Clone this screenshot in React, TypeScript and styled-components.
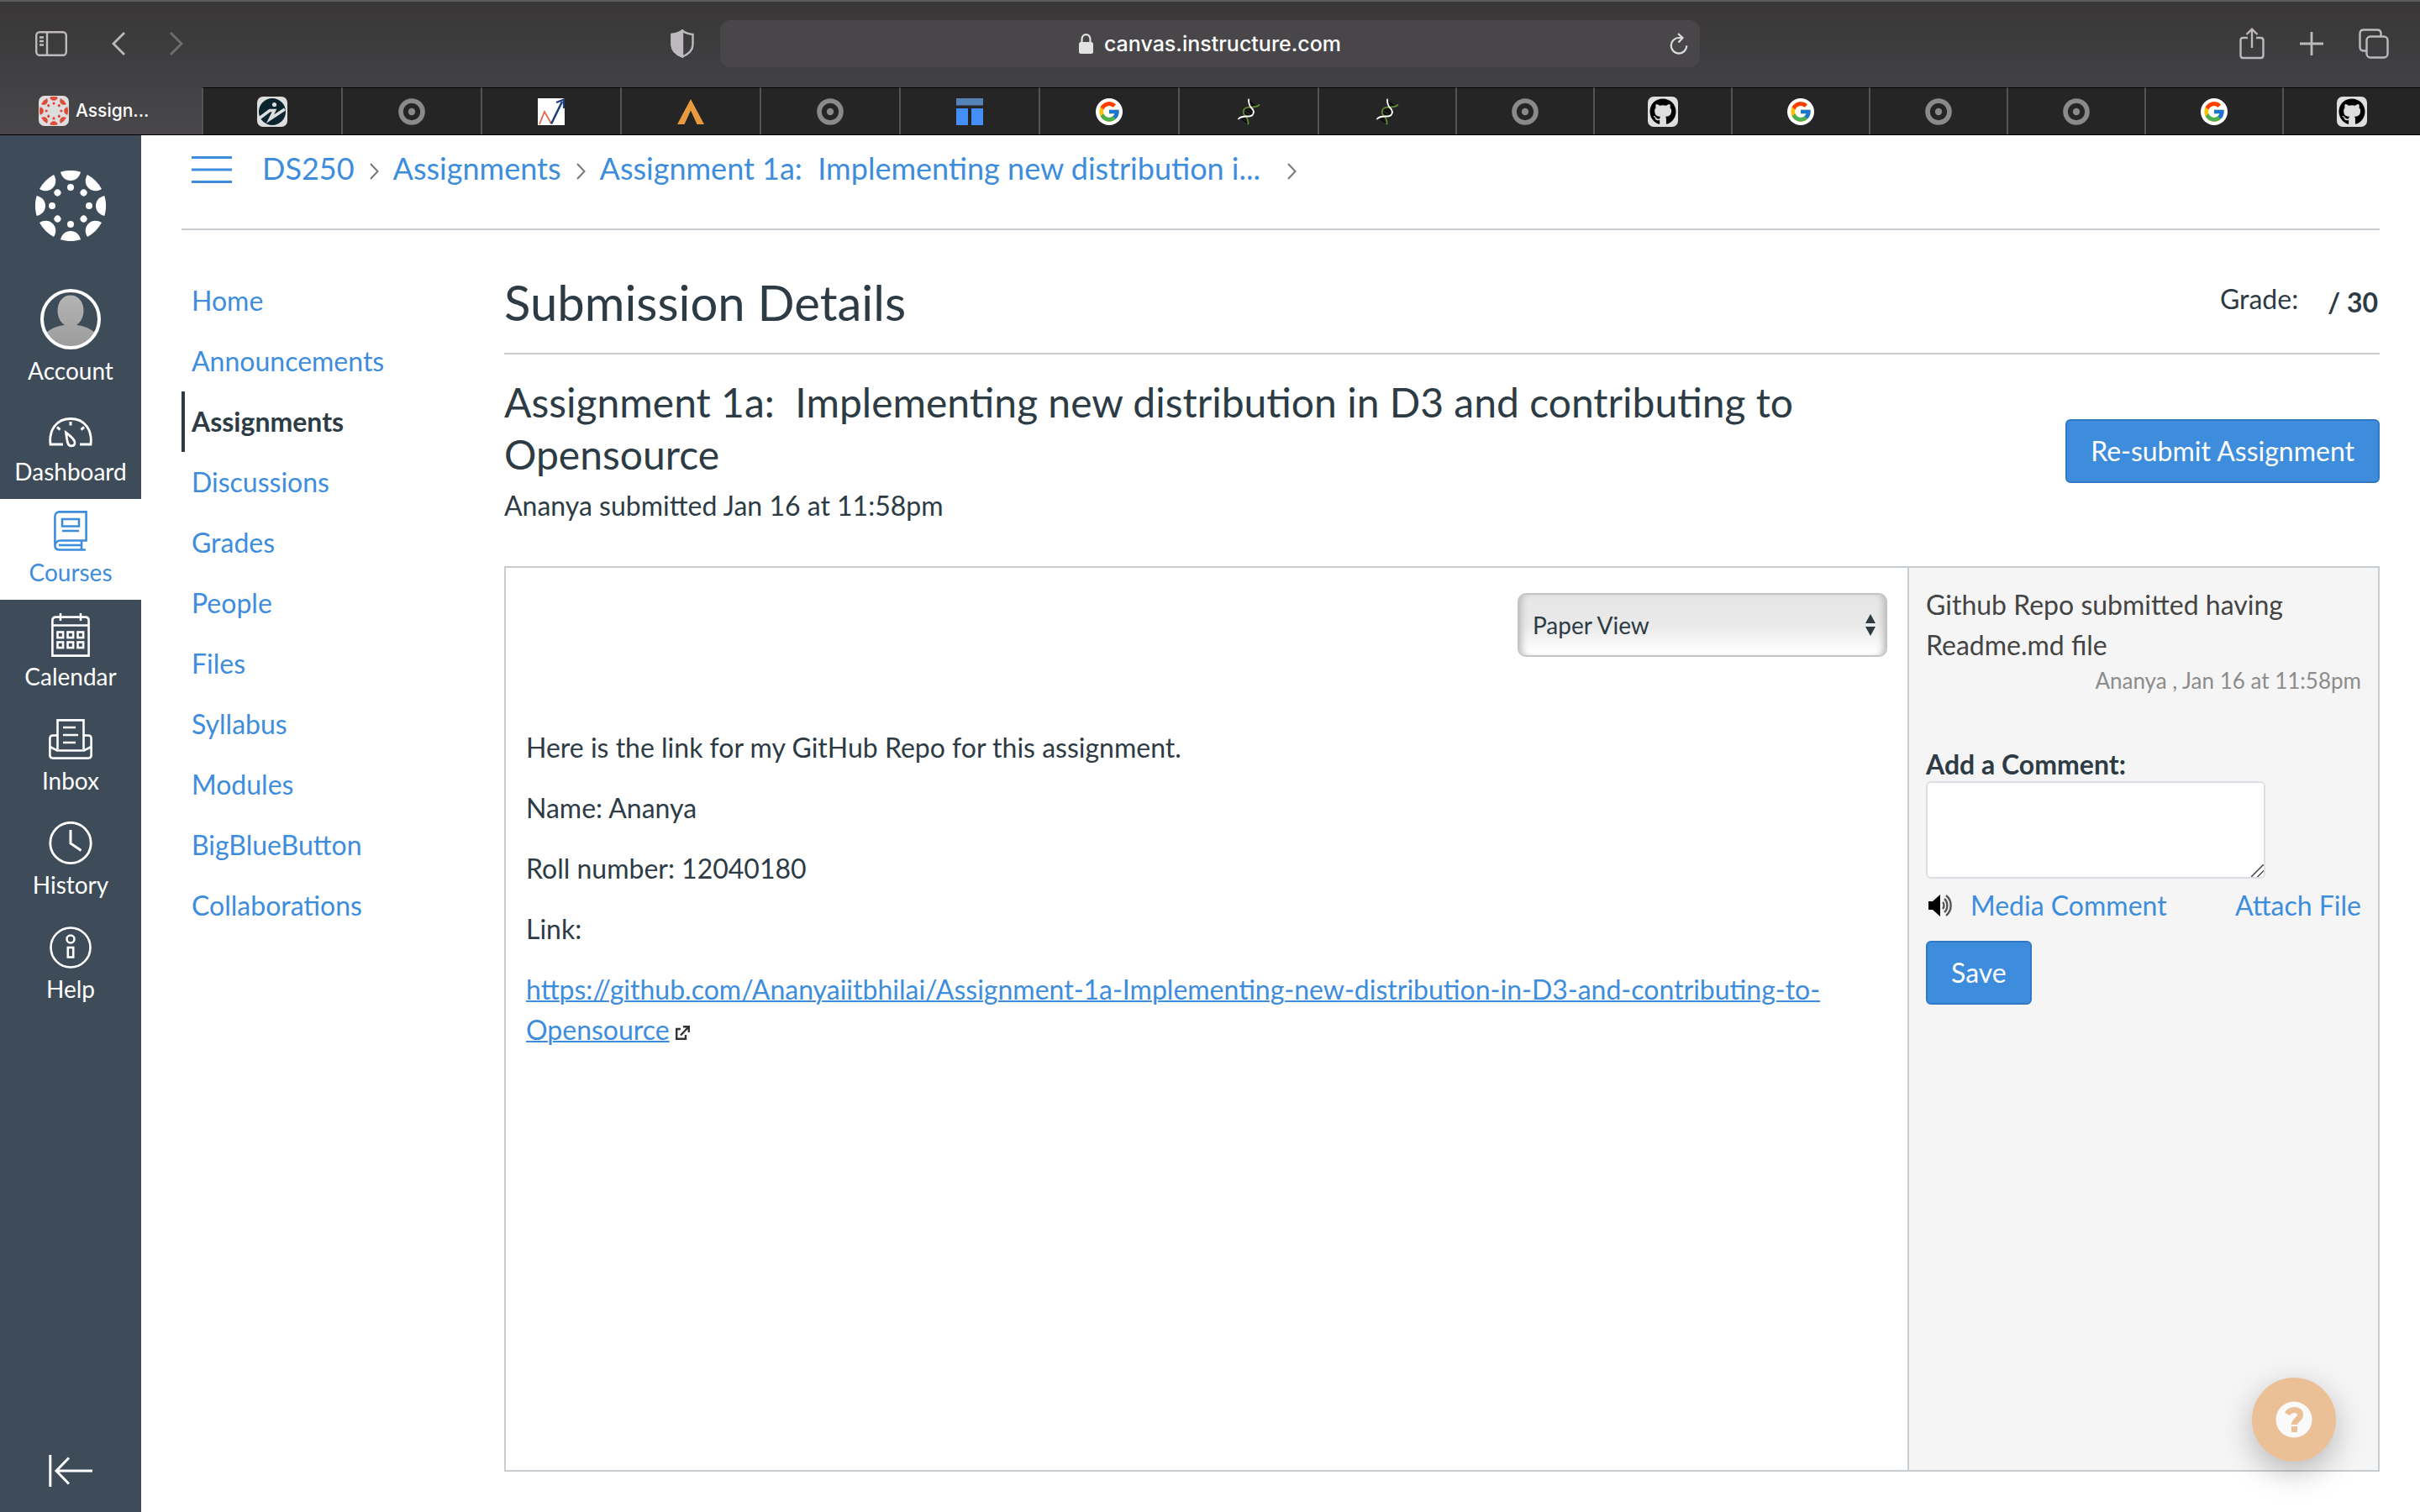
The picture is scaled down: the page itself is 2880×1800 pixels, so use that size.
import React from "react";
import styled, { createGlobalStyle } from "styled-components";
import { FaGithub } from "react-icons/fa";
import { FcGoogle } from "react-icons/fc";

const link = "#3e8ddd";
const ink = "#2d3b45";
const rule = "#c7cdd1";
const rail = "#3e4b58";

const GlobalStyle = createGlobalStyle`
  *, *::before, *::after { box-sizing: border-box; }
  body {
    margin: 0;
    background: #fff;
    color: ${ink};
    font-family: Lato, "Liberation Sans", sans-serif;
    font-size: 32px;
    line-height: 48px;
  }
  button, select, textarea { font: inherit; margin: 0; }
  a { color: ${link}; text-decoration: none; }
  h1, h2, p, ul, ol { margin: 0; padding: 0; }
  ul, ol { list-style: none; }
  svg { display: block; flex: none; }
`;

const Page = styled.div`
  display: flex;
  flex-direction: column;
  min-height: 100vh;
`;

/* Browser window */

const Toolbar = styled.header`
  display: grid;
  grid-template-columns: 857fr 1166fr 857fr;
  align-items: center;
  height: 104px;
  padding-bottom: 2px;
  border-top: 2px solid #5c5b5d;
  background: linear-gradient(#383636, #424144);
  color: #bcbabd;
`;

const ToolGroup = styled.div<{ $end?: boolean }>`
  display: flex;
  align-items: center;
  justify-content: ${(p) => (p.$end ? "flex-end" : "space-between")};
  gap: ${(p) => (p.$end ? "42px" : "0")};
  padding: ${(p) => (p.$end ? "0 37px 0 0" : "0 31px 0 42px")};
`;

const ToolSet = styled.div`
  display: flex;
  align-items: center;
  gap: 53px;
`;

const ToolButton = styled.button<{ $dim?: boolean }>`
  display: flex;
  padding: 0;
  border: 0;
  background: none;
  color: inherit;
  opacity: ${(p) => (p.$dim ? 0.4 : 1)};
`;

const AddressBar = styled.div`
  display: grid;
  grid-template-columns: 1fr auto 1fr;
  align-items: center;
  height: 56px;
  padding: 0 14px;
  border-radius: 12px;
  background: #484649;
  color: #fff;
  font-family: Inter, "Liberation Sans", sans-serif;
  font-size: 25px;
  font-weight: 500;
  line-height: 32px;
`;

const Address = styled.div`
  grid-column: 2;
  display: flex;
  align-items: center;
  gap: 13px;
`;

const ReloadSlot = styled.div`
  display: flex;
  justify-content: flex-end;
`;

const TabStrip = styled.nav`
  display: flex;
  height: 57px;
  border-bottom: 1px solid #000;
  background: #252525;
`;

const ActiveTab = styled.a`
  display: flex;
  align-items: center;
  gap: 8px;
  width: 240px;
  padding-left: 46px;
  background: linear-gradient(#424144, #49474a);
  color: #fff;
  font-family: Inter, "Liberation Sans", sans-serif;
  font-size: 21px;
  font-weight: 500;
  line-height: 28px;
`;

const Tab = styled.a<{ $share: number }>`
  flex: ${(p) => p.$share} 1 0;
  display: flex;
  align-items: center;
  justify-content: center;
  border-top: 1px solid #000;
  border-left: 2px solid #555;
`;

const Badge = styled.span`
  display: flex;
  align-items: center;
  justify-content: center;
  width: 36px;
  height: 36px;
  border-radius: 7px;
  background: #dedede;
  color: #000;
`;

const GoogleBadge = styled(Badge)`
  width: 32px;
  height: 32px;
  border-radius: 50%;
  background: #fff;
`;

/* Canvas page */

const Body = styled.div`
  flex: 1;
  display: flex;
`;

const Rail = styled.nav`
  display: flex;
  flex-direction: column;
  justify-content: space-between;
  width: 168px;
  background: ${rail};
`;

const LogoLink = styled.a`
  display: flex;
  justify-content: center;
  padding: 42px 0 41px;
  color: #fff;
`;

const RailLink = styled.a<{ $active?: boolean; $roomy?: boolean }>`
  display: flex;
  flex-direction: column;
  align-items: center;
  gap: 2px;
  padding: ${(p) => (p.$roomy ? "16px" : "14px")} 0 12px;
  background: ${(p) => (p.$active ? "#fff" : "transparent")};
  color: ${(p) => (p.$active ? link : "#fff")};
  font-size: 28px;
  line-height: 42px;
`;

const CollapseButton = styled.button`
  display: flex;
  justify-content: center;
  padding: 0 0 30px;
  border: 0;
  background: none;
  color: #fff;
`;

const Main = styled.div`
  flex: 1;
  min-width: 0;
  display: flex;
  flex-direction: column;
  padding: 0 48px;
`;

const Crumbs = styled.nav`
  display: flex;
  align-items: center;
  height: 113px;
  padding: 0 12px 30px;
  border-bottom: 2px solid ${rule};
  font-size: 36px;
  line-height: 48px;
`;

const MenuButton = styled.button`
  display: flex;
  margin-right: 36px;
  padding: 0;
  border: 0;
  background: none;
  color: ${link};
`;

const CrumbList = styled.ol`
  display: flex;
  align-items: center;
  gap: 17px;
  padding-bottom: 4px;
  white-space: pre;
`;

const Crumb = styled.li<{ $last?: boolean }>`
  display: flex;
  align-items: center;
  gap: ${(p) => (p.$last ? "32px" : "18px")};
`;

const Columns = styled.div`
  flex: 1;
  display: flex;
`;

const CourseNav = styled.ul`
  width: 384px;
  padding-top: 48px;
`;

const CourseLink = styled.a<{ $active?: boolean }>`
  display: block;
  padding: 12px 8px;
  border-left: 4px solid ${(p) => (p.$active ? ink : "transparent")};
  color: ${(p) => (p.$active ? ink : link)};
  font-weight: ${(p) => (p.$active ? 700 : 400)};
`;

const Content = styled.main`
  flex: 1;
  min-width: 0;
  display: flex;
  flex-direction: column;
  padding-bottom: 48px;
`;

const TitleRow = styled.div`
  display: flex;
  align-items: flex-start;
  justify-content: space-between;
  height: 148px;
  padding-top: 46px;
  border-bottom: 2px solid ${rule};
`;

const PageTitle = styled.h1`
  font-size: 58px;
  font-weight: 400;
  line-height: 80px;
`;

const Grade = styled.div`
  display: flex;
  align-items: flex-start;
  gap: 35px;
  padding: 12px 2px 0 0;
`;

const Points = styled.strong`
  padding-top: 4px;
`;

const SummaryRow = styled.div`
  display: flex;
  align-items: center;
  justify-content: space-between;
  gap: 48px;
  padding: 26px 0 48px;
`;

const Summary = styled.div`
  flex: 1;
  max-width: 1600px;
`;

const AssignmentTitle = styled.h2`
  padding-bottom: 6px;
  font-size: 48px;
  font-weight: 400;
  line-height: 62px;
  white-space: pre-wrap;
`;

const PrimaryButton = styled.button`
  height: 76px;
  padding: 0 28px;
  border: 2px solid #2f78c4;
  border-radius: 6px;
  background: ${link};
  color: #fff;
  line-height: 40px;
`;

const Submission = styled.section`
  flex: 1;
  display: flex;
  border: 2px solid ${rule};
`;

const Preview = styled.div`
  flex: 1;
  min-width: 0;
  display: flex;
  flex-direction: column;
  gap: 84px;
  padding: 30px 24px;
`;

const ViewPicker = styled.label`
  align-self: flex-end;
  display: grid;
  align-items: center;
  width: 440px;
  height: 76px;
  color: ${ink};

  > * { grid-area: 1 / 1; }
  > svg { justify-self: end; margin-right: 14px; pointer-events: none; }
`;

const ViewSelect = styled.select`
  appearance: none;
  width: 100%;
  height: 100%;
  padding: 0 16px;
  border: 2px solid #c4c4c4;
  border-radius: 10px;
  background: linear-gradient(#e6e6e6 0%, #e9e9e9 50%, #fefefe 95%);
  box-shadow: inset 8px 0 8px -6px #b4b4b4, inset -8px 0 8px -6px #b4b4b4;
  color: ${ink};
  font-size: 28px;
  line-height: 40px;
`;

const Prose = styled.div`
  display: flex;
  flex-direction: column;
  gap: 24px;

  a { text-decoration: underline; text-decoration-thickness: 2px; }
  svg { display: inline-block; margin-left: 7px; }
`;

const Comments = styled.aside`
  display: flex;
  flex-direction: column;
  width: 560px;
  padding: 20px;
  border-left: 2px solid ${rule};
  background: #f5f5f5;
`;

const CommentText = styled.p`
  max-width: 460px;
  color: #444;
`;

const CommentMeta = styled.p`
  color: #8c8c8c;
  font-size: 26px;
  line-height: 36px;
  text-align: right;
`;

const CommentForm = styled.form`
  display: flex;
  flex-direction: column;
  align-items: flex-start;
  padding-top: 62px;
`;

const CommentLabel = styled.label`
  font-weight: 700;
  line-height: 40px;
`;

const CommentBox = styled.textarea`
  width: 404px;
  height: 116px;
  padding: 8px;
  border: 2px solid #d9dfe4;
  border-radius: 6px;
  background: #fff;
  resize: both;

  &::-webkit-scrollbar { width: 18px; }
  &::-webkit-resizer {
    background: linear-gradient(
      135deg,
      transparent 46%, #555 47% 53%, transparent 54% 72%, #555 73% 79%, transparent 80%
    );
  }
`;

const Attachments = styled.div`
  align-self: stretch;
  display: flex;
  align-items: flex-start;
  justify-content: space-between;
  padding: 8px 0 18px;
`;

const MediaLink = styled.a`
  display: flex;
  align-items: center;
  gap: 20px;
  padding-left: 3px;
`;

const HelpBubble = styled.button`
  position: fixed;
  right: 100px;
  bottom: 60px;
  display: flex;
  align-items: center;
  justify-content: center;
  width: 100px;
  height: 100px;
  padding: 0;
  border: 0;
  border-radius: 50%;
  background: #ecc096;
  box-shadow: 0 12px 36px rgba(0, 0, 0, 0.25);
`;

/* Drawings */

const turns = [0, 45, 90, 135, 180, 225, 270, 315];

const CanvasMark = ({ size, color }: { size: number; color: string }) => (
  <svg width={size} height={size} viewBox="-42 -42 84 84" fill={color} aria-hidden="true">
    {turns.map((t) => (
      <g key={t} transform={`rotate(${t})`}>
        <path d="M-12 -40.3A42 42 0 0 1 12 -40.3C10.500 -34 6 -30 0 -30C-6 -30 -10.500 -34 -12 -40.300Z" />
        <circle cy="-22" r="4" />
      </g>
    ))}
  </svg>
);

const RingIcon = () => (
  <svg width="32" height="32" viewBox="0 0 32 32" aria-hidden="true">
    <ellipse cx="16" cy="16" rx="13" ry="13" fill="none" stroke="#8a8a8a" strokeWidth="5.600" />
    <circle cx="16" cy="16" r="4.200" fill="#8a8a8a" />
  </svg>
);

const InfoFavicon = () => (
  <Badge>
    <svg width="32" height="32" viewBox="0 0 32 32" aria-hidden="true">
      <circle cx="16" cy="16" r="16" fill="#0b2530" />
      <circle cx="18.500" cy="7.500" r="2.600" fill="#dedede" />
      <path d="M1 23.500L13 14.500H18.500L13.500 24.500L31 13" fill="none" stroke="#dedede" strokeWidth="3.600" />
    </svg>
  </Badge>
);

const ChartFavicon = () => (
  <svg width="32" height="32" viewBox="0 0 32 32" aria-hidden="true">
    <rect width="32" height="32" fill="#fff" />
    <path d="M2 31L8 16L16 30" fill="none" stroke="#e0684a" strokeWidth="1.800" />
    <path d="M16 30.500L29 4" fill="none" stroke="#1c3f7c" strokeWidth="2.600" />
    <path d="M22 5L31 1.500V12" fill="none" stroke="#1c3f7c" strokeWidth="2.200" />
  </svg>
);

const PeakFavicon = () => (
  <svg width="32" height="32" viewBox="0 0 32 32" fill="#ea9a3e" aria-hidden="true">
    <path d="M16 1L32 31H23.500L16 14.500L8.500 31H0Z" />
  </svg>
);

const BoardFavicon = () => (
  <svg width="32" height="32" viewBox="0 0 32 32" aria-hidden="true">
    <path d="M0 0H32V8.500H0Z" fill="#5583b8" />
    <path d="M0 12H14V32H0ZM18 12H32V32H18Z" fill="#448ff7" />
  </svg>
);

const HelixFavicon = () => (
  <svg width="32" height="32" viewBox="0 0 32 32" fill="none" aria-hidden="true">
    <path d="M17 4L24 9M18 8L22 10M12 13L20 19M14 11L21 16M11 17L17 21M7 24L14 29M10 23L15 26" stroke="#000" strokeWidth="1.400" />
    <path d="M28.500 8C24 12 17 9.500 12.500 11.500C9 13.500 9 17 11 20C13 22.500 16 24 15.500 30.500" stroke="#5d8a2c" strokeWidth="1.800" strokeLinecap="round" />
    <path d="M16 1.500C16 6 16.500 8.500 19 11C22 14 23 17 20.500 20C17 23.500 9 19 4 24.500" stroke="#fff" strokeWidth="1.800" strokeLinecap="round" />
  </svg>
);

const GitHubFavicon = () => (
  <Badge>
    <FaGithub size={32} />
  </Badge>
);

const GoogleFavicon = () => (
  <GoogleBadge>
    <FcGoogle size={28} />
  </GoogleBadge>
);

const CrumbArrow = () => (
  <svg width="11" height="28" viewBox="0 0 11 28" fill="none" stroke="#777" strokeWidth="2" aria-hidden="true">
    <path d="M1 9L9.500 18L1 27" />
  </svg>
);

const AccountIcon = () => (
  <svg width="72" height="76" viewBox="0 0 72 76" aria-hidden="true">
    <defs>
      <clipPath id="face"><circle cx="36" cy="38" r="33" /></clipPath>
      <linearGradient id="shade" x1="0" y1="0" x2="0" y2="1">
        <stop offset="0" stopColor="#b4b4b4" />
        <stop offset="1" stopColor="#9c9c9c" />
      </linearGradient>
    </defs>
    <path
      clipPath="url(#face)"
      fill="url(#shade)"
      d="M36 9.500C45 9.500 51.500 17 51.500 28C51.500 36 47.500 42 43 45C53 46 60 49.500 66 55V72H6V55C12 49.500 19 46 29 45C24.500 42 20.500 36 20.500 28C20.500 17 27 9.500 36 9.500Z"
    />
    <circle cx="36" cy="38" r="34" fill="none" stroke="#fff" strokeWidth="4" />
  </svg>
);

const DashboardIcon = () => (
  <svg width="52" height="50" viewBox="0 0 52 50" fill="none" stroke="currentColor" strokeWidth="2.800" aria-hidden="true">
    <path d="M17 41H2C0 24 9 10.500 26 10.500S52 24 50 41H37" />
    <path d="M26 14V18.500M10 20.500L13.500 23.500M42 20.500L38.500 23.500" strokeWidth="3" />
    <path d="M20.500 27C26 31 32 36 31 40C30 44 24 44 22.500 39C21.800 36 21 31 20.500 27Z" />
  </svg>
);

const CoursesIcon = () => (
  <svg width="40" height="50" viewBox="0 0 40 50" fill="none" stroke="currentColor" strokeWidth="2.600" aria-hidden="true">
    <path d="M1.400 42V7C1.400 3.500 3.500 1.400 7 1.400H38.600V35.500H8C4 35.500 1.400 38 1.400 41.500C1.400 44.500 3.500 46.500 7 46.500H38" />
    <path d="M10 10H30V18.500H10ZM10 24H30M6 41H33M33 36V46" />
  </svg>
);

const CalendarIcon = () => (
  <svg width="46" height="52" viewBox="0 0 46 52" fill="none" stroke="currentColor" strokeWidth="2.600" aria-hidden="true">
    <path d="M1.400 50.600V8.500C1.400 6 3 4.600 5.500 4.600H40.500C43 4.600 44.600 6 44.600 8.500V50.600ZM1.400 14.500H44.600M11 0V9M35 0V9" />
    {[7.5, 19.5, 31.5].flatMap((x) =>
      [22.5, 34.5].map((y) => <rect key={`${x}-${y}`} x={x} y={y} width="6.600" height="6.600" />)
    )}
  </svg>
);

const InboxIcon = () => (
  <svg width="52" height="52" viewBox="0 0 52 52" fill="none" stroke="currentColor" strokeWidth="2.600" aria-hidden="true">
    <path d="M10.500 38V3.400H41.500V38" />
    <path d="M10 21.500H5C2.500 21.500 1.400 23 1.400 25V45C1.400 47.500 2.500 48.600 5 48.600H47C49.500 48.600 50.600 47.500 50.600 45V25C50.600 23 49.500 21.500 47 21.500H42" />
    <path d="M1.400 35L10 39.500H42L50.600 35" />
    <path d="M17 12H32M17 21H35M17 30H32" />
  </svg>
);

const HistoryIcon = () => (
  <svg width="52" height="52" viewBox="0 1 52 52" fill="none" stroke="currentColor" strokeWidth="2.800" aria-hidden="true">
    <circle cx="26" cy="26.500" r="24.200" />
    <path d="M26 11V27L38.500 35.500" strokeWidth="3" />
  </svg>
);

const HelpIcon = () => (
  <svg width="52" height="52" viewBox="0 0 52 52" fill="none" stroke="currentColor" strokeWidth="2.600" aria-hidden="true">
    <circle cx="26" cy="26" r="23.500" />
    <circle cx="26" cy="16" r="4.500" />
    <rect x="22.800" y="26" width="6.400" height="11.500" />
  </svg>
);

const SpeakerIcon = () => (
  <svg width="30" height="28" viewBox="0 0 30 28" fill="none" aria-hidden="true">
    <path d="M0 9H5L14 1V27L5 19H0Z" fill="#000" />
    <path d="M17 10C19 12 19 16 17 18M19 6C23.500 10 23.500 18 19 22M21 2C28.500 8 28.500 20 21 26" stroke="#555" strokeWidth="2.400" />
  </svg>
);

/* Content */

const tabs: { name: string; icon: React.ReactNode }[] = [
  { name: "Info", icon: <InfoFavicon /> },
  { name: "Observable", icon: <RingIcon /> },
  { name: "Chart", icon: <ChartFavicon /> },
  { name: "Peak", icon: <PeakFavicon /> },
  { name: "Observable", icon: <RingIcon /> },
  { name: "Board", icon: <BoardFavicon /> },
  { name: "Google", icon: <GoogleFavicon /> },
  { name: "Helix", icon: <HelixFavicon /> },
  { name: "Helix", icon: <HelixFavicon /> },
  { name: "Observable", icon: <RingIcon /> },
  { name: "GitHub", icon: <GitHubFavicon /> },
  { name: "Google", icon: <GoogleFavicon /> },
  { name: "Observable", icon: <RingIcon /> },
  { name: "Observable", icon: <RingIcon /> },
  { name: "Google", icon: <GoogleFavicon /> },
  { name: "GitHub", icon: <GitHubFavicon /> },
];

const railLinks = [
  { label: "Account", icon: <AccountIcon /> },
  { label: "Dashboard", icon: <DashboardIcon /> },
  { label: "Courses", icon: <CoursesIcon />, active: true },
  { label: "Calendar", icon: <CalendarIcon />, roomy: true },
  { label: "Inbox", icon: <InboxIcon />, roomy: true },
  { label: "History", icon: <HistoryIcon />, roomy: true },
  { label: "Help", icon: <HelpIcon />, roomy: true },
];

const courseLinks = [
  "Home",
  "Announcements",
  "Assignments",
  "Discussions",
  "Grades",
  "People",
  "Files",
  "Syllabus",
  "Modules",
  "BigBlueButton",
  "Collaborations",
];

const BrowserChrome = () => (
  <>
    <Toolbar>
      <ToolGroup>
        <ToolSet>
          <ToolButton aria-label="Show sidebar">
            <svg width="38" height="30" viewBox="0 0 38 30" fill="none" stroke="currentColor" strokeWidth="2.400">
              <rect x="1.200" y="1.200" width="35.600" height="27.600" rx="4" />
              <path d="M14 1V29M5 7.500H10M5 12H10M5 16.500H10" />
            </svg>
          </ToolButton>
          <ToolButton aria-label="Back">
            <svg width="16" height="28" viewBox="0 0 16 28" fill="none" stroke="currentColor" strokeWidth="2.800">
              <path d="M15 1L2 14L15 27" />
            </svg>
          </ToolButton>
          <ToolButton aria-label="Forward" $dim>
            <svg width="16" height="28" viewBox="0 0 16 28" fill="none" stroke="currentColor" strokeWidth="2.800">
              <path d="M1 1L14 14L1 27" />
            </svg>
          </ToolButton>
        </ToolSet>
        <ToolButton aria-label="Privacy report">
          <svg width="28" height="34" viewBox="0 0 28 34" fill="none" stroke="currentColor" strokeWidth="2.400">
            <path d="M14 1.500C17 4 22 5.500 26.500 6V18C26.500 25 20 30 14 32.500C8 30 1.500 25 1.500 18V6C6 5.500 11 4 14 1.500Z" />
            <path d="M14 1.500V32.500C8 30 1.500 25 1.500 18V6C6 5.500 11 4 14 1.500Z" fill="currentColor" />
          </svg>
        </ToolButton>
      </ToolGroup>
      <AddressBar>
        <Address>
          <svg width="17" height="24" viewBox="0 0 17 24" aria-hidden="true">
            <rect y="10" width="17" height="14" rx="2.500" fill="#e2e2e2" />
            <path d="M3.500 11V7C3.500 3.500 5.500 1.200 8.500 1.200S13.500 3.500 13.500 7V11" fill="none" stroke="#e2e2e2" strokeWidth="2.200" />
          </svg>
          canvas.instructure.com
        </Address>
        <ReloadSlot>
          <ToolButton aria-label="Reload">
            <svg width="22" height="26" viewBox="0 0 22 26" fill="none" stroke="#dcdcdc" strokeWidth="2.200">
              <path d="M14 6H11A9.300 9.300 0 1 0 20.300 15.300M10 1L15.500 6L10.500 11.500" />
            </svg>
          </ToolButton>
        </ReloadSlot>
      </AddressBar>
      <ToolGroup $end>
        <ToolButton aria-label="Share">
          <svg width="30" height="38" viewBox="0 0 30 38" fill="none" stroke="currentColor" strokeWidth="2.400">
            <path d="M10 12H4.500C2.500 12 1.500 13 1.500 15V33C1.500 35 2.500 36 4.500 36H25.500C27.500 36 28.500 35 28.500 33V15C28.500 13 27.500 12 25.500 12H20M15 24V2M8.500 8L15 1.700L21.500 8" />
          </svg>
        </ToolButton>
        <ToolButton aria-label="New tab">
          <svg width="28" height="28" viewBox="0 0 28 28" fill="none" stroke="currentColor" strokeWidth="2.800">
            <path d="M14 0V28M0 14H28" />
          </svg>
        </ToolButton>
        <ToolButton aria-label="Show all tabs">
          <svg width="36" height="36" viewBox="0 0 36 36" fill="none" stroke="currentColor" strokeWidth="2.400">
            <rect x="9.500" y="9.500" width="25" height="25" rx="4.500" />
            <path d="M9.500 26.500H6C3 26.500 1.500 25 1.500 22V6C1.500 3 3 1.500 6 1.500H22C25 1.500 26.500 3 26.500 6V9.500" />
          </svg>
        </ToolButton>
      </ToolGroup>
    </Toolbar>
    <TabStrip aria-label="Open tabs">
      <ActiveTab href="#">
        <Badge>
          <CanvasMark size={34} color="#dd4a38" />
        </Badge>
        Assign...
      </ActiveTab>
      {tabs.map((tab, i) => (
        <Tab key={i} href="#" $share={i < 8 ? 83 : 82} aria-label={tab.name}>
          {tab.icon}
        </Tab>
      ))}
    </TabStrip>
  </>
);

const GlobalNav = () => (
  <Rail aria-label="Global navigation">
    <div>
      <LogoLink href="#" aria-label="Canvas dashboard">
        <CanvasMark size={84} color="#fff" />
      </LogoLink>
      {railLinks.map((item) => (
        <RailLink key={item.label} href="#" $active={item.active} $roomy={item.roomy}>
          {item.icon}
          {item.label}
        </RailLink>
      ))}
    </div>
    <CollapseButton aria-label="Minimize global navigation">
      <svg width="52" height="38" viewBox="0 0 52 38" fill="none" stroke="currentColor" strokeWidth="3" aria-hidden="true">
        <path d="M1.800 0V38M52 19H10M24 3.500L9 19L24 34.500" />
      </svg>
    </CollapseButton>
  </Rail>
);

export default function App() {
  return (
    <Page>
      <GlobalStyle />
      <BrowserChrome />
      <Body>
        <GlobalNav />
        <Main>
          <Crumbs aria-label="Breadcrumbs">
            <MenuButton aria-label="Toggle course navigation">
              <svg width="48" height="32" viewBox="0 0 48 32" stroke="currentColor" strokeWidth="2.800">
                <path d="M0 1.500H48M0 16H48M0 30.500H48" />
              </svg>
            </MenuButton>
            <CrumbList>
              <Crumb>
                <a href="#">DS250</a>
                <CrumbArrow />
              </Crumb>
              <Crumb>
                <a href="#">Assignments</a>
                <CrumbArrow />
              </Crumb>
              <Crumb $last>
                <a href="#">{"Assignment 1a:  Implementing new distribution i..."}</a>
                <CrumbArrow />
              </Crumb>
            </CrumbList>
          </Crumbs>
          <Columns>
            <nav aria-label="Course navigation">
              <CourseNav>
                {courseLinks.map((label) => (
                  <li key={label}>
                    <CourseLink href="#" $active={label === "Assignments"}>
                      {label}
                    </CourseLink>
                  </li>
                ))}
              </CourseNav>
            </nav>
            <Content>
              <TitleRow>
                <PageTitle>Submission Details</PageTitle>
                <Grade>
                  <span>Grade:</span>
                  <Points>/ 30</Points>
                </Grade>
              </TitleRow>
              <SummaryRow>
                <Summary>
                  <AssignmentTitle>
                    {"Assignment 1a:  Implementing new distribution in D3 and contributing to Opensource"}
                  </AssignmentTitle>
                  <p>Ananya submitted Jan 16 at 11:58pm</p>
                </Summary>
                <PrimaryButton>Re-submit Assignment</PrimaryButton>
              </SummaryRow>
              <Submission>
                <Preview>
                  <ViewPicker aria-label="Preview mode">
                    <ViewSelect defaultValue="paper" aria-label="Preview mode">
                      <option value="paper">Paper View</option>
                      <option value="plain">Plain Text View</option>
                    </ViewSelect>
                    <svg width="12" height="26" viewBox="0 0 12 26" fill="currentColor" aria-hidden="true">
                      <path d="M6 0L12 11H0ZM6 26L12 15H0Z" />
                    </svg>
                  </ViewPicker>
                  <Prose>
                    <p>Here is the link for my GitHub Repo for this assignment.</p>
                    <p>Name: Ananya</p>
                    <p>Roll number: 12040180</p>
                    <p>Link:</p>
                    <p>
                      <a href="#">
                        https://github.com/Ananyaiitbhilai/Assignment-1a-Implementing-new-distribution-in-D3-and-contributing-to-Opensource
                      </a>
                      <svg width="17" height="17" viewBox="0 0 17 17" fill="none" stroke="#333" strokeWidth="2.400" aria-hidden="true">
                        <path d="M6 4H1.200V15.800H12V11M6 11.500L15 2M9 1.200H15.800V8" />
                      </svg>
                    </p>
                  </Prose>
                </Preview>
                <Comments>
                  <CommentText>Github Repo submitted having Readme.md file</CommentText>
                  <CommentMeta>Ananya , Jan 16 at 11:58pm</CommentMeta>
                  <CommentForm onSubmit={(e) => e.preventDefault()}>
                    <CommentLabel htmlFor="comment">Add a Comment:</CommentLabel>
                    <CommentBox id="comment" />
                    <Attachments>
                      <MediaLink href="#">
                        <SpeakerIcon />
                        Media Comment
                      </MediaLink>
                      <a href="#">Attach File</a>
                    </Attachments>
                    <PrimaryButton>Save</PrimaryButton>
                  </CommentForm>
                </Comments>
              </Submission>
            </Content>
          </Columns>
        </Main>
      </Body>
      <HelpBubble aria-label="Help">
        <svg width="44" height="44" viewBox="0 0 44 44" aria-hidden="true">
          <circle cx="22" cy="22" r="21.500" fill="#fafafa" />
          <path d="M14 15.500C16.500 11 19 10.500 22.500 10.500C27 10.500 29.500 12.500 29.500 16.500C29.500 22 22.500 22 22.500 28" fill="none" stroke="#ecc096" strokeWidth="7" />
          <rect x="19" y="30" width="7" height="7" fill="#ecc096" />
        </svg>
      </HelpBubble>
    </Page>
  );
}
